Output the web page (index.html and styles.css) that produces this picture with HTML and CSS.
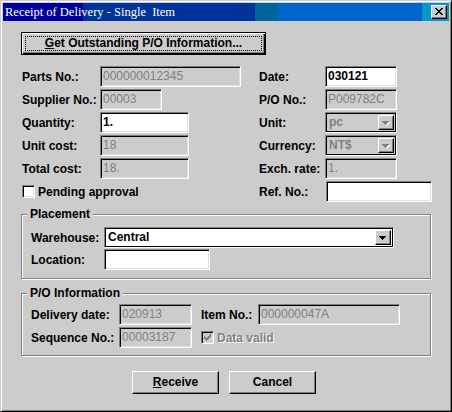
FILE: index.html
```html
<!DOCTYPE html>
<html>
<head>
<meta charset="utf-8">
<title>Receipt of Delivery - Single Item</title>
<link rel="stylesheet" href="styles.css">
</head>
<body>
<div class="window">
  <div class="titlebar">
    <span class="title">Receipt of Delivery - Single  Item</span>
    <span class="close">
      <svg width="8" height="7" viewBox="0 0 8 7" shape-rendering="crispEdges"><path fill="#000" d="M0 0h2v1h-2z M6 0h2v1h-2z M1 1h2v1h-2z M5 1h2v1h-2z M2 2h4v1h-4z M3 3h2v1h-2z M2 4h4v1h-4z M1 5h2v1h-2z M5 5h2v1h-2z M0 6h2v1h-2z M6 6h2v1h-2z"/></svg>
    </span>
  </div>
  <div class="content">
    <div class="btn default wide"><span class="focus"><u>G</u>et Outstanding P/O Information...</span></div>

    <div class="fields">
      <span class="lbl">Parts No.:</span>
      <div class="edit dis w141">000000012345</div>
      <span class="lbl">Date:</span>
      <div class="edit w72">030121</div>

      <span class="lbl">Supplier No.:</span>
      <div class="edit dis w62">00003</div>
      <span class="lbl">P/O No.:</span>
      <div class="edit dis w72">P009782C</div>

      <span class="lbl">Quantity:</span>
      <div class="edit w89">1.</div>
      <span class="lbl">Unit:</span>
      <div class="combo dis w72"><span class="ctext">pc</span><span class="drop"><svg width="8" height="5" viewBox="0 0 8 5" shape-rendering="crispEdges"><path fill="#fff" d="M1 1h7v1h-1v1h-1v1h-1v1h-1v-1h-1v-1h-1v-1h-1z"/><path fill="#808080" d="M0 0h7v1h-1v1h-1v1h-1v1h-1v-1h-1v-1h-1v-1h-1z"/></svg></span></div>

      <span class="lbl">Unit cost:</span>
      <div class="edit dis w89">18</div>
      <span class="lbl">Currency:</span>
      <div class="combo dis w72"><span class="ctext">NT$</span><span class="drop"><svg width="8" height="5" viewBox="0 0 8 5" shape-rendering="crispEdges"><path fill="#fff" d="M1 1h7v1h-1v1h-1v1h-1v1h-1v-1h-1v-1h-1v-1h-1z"/><path fill="#808080" d="M0 0h7v1h-1v1h-1v1h-1v1h-1v-1h-1v-1h-1v-1h-1z"/></svg></span></div>

      <span class="lbl">Total cost:</span>
      <div class="edit dis w89">18.</div>
      <span class="lbl">Exch. rate:</span>
      <div class="edit dis w72">1.</div>

      <div class="check span2"><span class="box"></span><span>Pending approval</span></div>
      <span class="lbl">Ref. No.:</span>
      <div class="edit w106 nudge"></div>
    </div>

    <div class="group placement">
      <span class="legend">Placement</span>
      <div class="grid-place">
        <span class="lbl">Warehouse:</span>
        <div class="combo w290"><span class="ctext">Central</span><span class="drop"><svg width="7" height="4" viewBox="0 0 7 4" shape-rendering="crispEdges"><path fill="#000" d="M0 0h7v1h-1v1h-1v1h-1v1h-1v-1h-1v-1h-1v-1h-1z"/></svg></span></div>
        <span class="lbl">Location:</span>
        <div class="edit w106"></div>
      </div>
    </div>

    <div class="group poinfo">
      <span class="legend">P/O Information</span>
      <div class="grid-po">
        <span class="lbl">Delivery date:</span>
        <div class="edit dis w73">020913</div>
        <span class="lbl">Item No.:</span>
        <div class="edit dis w142">000000047A</div>

        <span class="lbl">Sequence No.:</span>
        <div class="edit dis w73">00003187</div>
        <div class="check disabled span2"><span class="box"><svg width="7" height="7" viewBox="0 0 7 7" shape-rendering="crispEdges"><path fill="#808080" d="M6 0h1v3h-1z M5 1h1v3h-1z M4 2h1v3h-1z M3 3h1v3h-1z M2 4h1v3h-1z M1 3h1v3h-1z M0 2h1v3h-1z"/></svg></span><span class="dtext">Data valid</span></div>
      </div>
    </div>

    <div class="footer">
      <div class="btn action"><span><u>R</u>eceive</span></div>
      <div class="btn action"><span>Cancel</span></div>
    </div>
  </div>
</div>
</body>
</html>
```

FILE: styles.css
```css
* { box-sizing: border-box; }
html, body { margin: 0; padding: 0; background: #cccccc; }
body { font: bold 12px "Liberation Sans", Arial, sans-serif; color: #000; }

.window {
  width: 452px;
  height: 412px;
  border: 1px solid;
  border-color: #cccccc #000 #000 #cccccc;
  box-shadow: inset 1px 1px #fff, inset -1px -1px #808080;
  padding: 2px;
  background: #cccccc;
}

.titlebar {
  height: 18px;
  display: flex;
  align-items: center;
  padding: 0 2px;
  background: linear-gradient(to right,
    #00009c 0, #00009c 80px,
    #003399 80px, #003399 252px,
    #006699 252px, #006699 275px,
    #0066cc 275px, #0066cc 419px,
    #0099cc 419px, #0099cc 100%);
}
.title {
  font: normal 12.5px "Liberation Serif", "Times New Roman", serif;
  color: #fff;
  white-space: pre;
  line-height: 18px;
}
.close {
  margin-left: auto;
  width: 16px;
  height: 14px;
  background: #cccccc;
  border: 1px solid;
  border-color: #fff #000 #000 #fff;
  box-shadow: inset -1px -1px #808080;
  display: flex;
  align-items: center;
  justify-content: center;
  padding: 0 1px 1px 0;
}
.close svg { display: block; }

.content { padding: 11px 0 0 18px; }

.btn {
  height: 23px;
  display: flex;
  align-items: center;
  justify-content: center;
  background: #cccccc;
  border: 1px solid;
  border-color: #fff #000 #000 #fff;
  box-shadow: inset -1px -1px #808080;
  line-height: 14px;
}
.btn.default {
  border-color: #000;
  box-shadow: inset 1px 1px #fff, inset -1px -1px #000, inset -2px -2px #808080;
  padding: 3px;
}
.btn.wide { width: 245px; }
.focus {
  display: flex;
  align-items: center;
  justify-content: center;
  width: 100%;
  height: 100%;
  border: 1px dotted #000;
  padding-bottom: 1px;
}
.btn.action { width: 87px; padding-bottom: 1px; }

.fields {
  display: grid;
  grid-template-columns: 78px 159px 66px 1fr;
  grid-auto-rows: 21px;
  row-gap: 2px;
  align-items: center;
  margin: 11px 0 0 1px;
}
.lbl { white-space: nowrap; line-height: 14px; }
.span2 { grid-column: span 2; }

.edit {
  height: 21px;
  border: 1px solid;
  border-color: #808080 #fff #fff #808080;
  box-shadow: inset 1px 1px #000, inset -1px -1px #dfdfdf;
  background: #fff;
  padding: 0 2px;
  line-height: 18px;
  white-space: nowrap;
  overflow: hidden;
}
.edit.dis { background: #cccccc; color: #808080; font-weight: normal; }
.nudge { margin-left: 1px; }

.w62 { width: 62px; }
.w72 { width: 72px; }
.w73 { width: 73px; }
.w89 { width: 89px; }
.w106 { width: 106px; }
.w141 { width: 141px; }
.w142 { width: 142px; }
.w290 { width: 290px; }

.combo {
  height: 21px;
  display: flex;
  border: 1px solid;
  border-color: #808080 #fff #fff #808080;
  box-shadow: inset 0 0 0 1px #000;
  background: #fff;
  padding: 2px;
}
.combo.dis { background: #cccccc; color: #808080; }
.ctext { flex: 1; padding-left: 1px; line-height: 15px; white-space: nowrap; }
.drop {
  width: 16px;
  height: 15px;
  background: #cccccc;
  border: 1px solid;
  border-color: #fff #000 #000 #fff;
  box-shadow: inset -1px -1px #808080;
  display: flex;
  align-items: center;
  justify-content: center;
  padding: 1px 1px 0 0;
}
.drop svg { display: block; }

.check { display: flex; align-items: center; gap: 3px; line-height: 14px; }
.box {
  width: 13px;
  height: 13px;
  background: #fff;
  border: 1px solid;
  border-color: #808080 #fff #fff #808080;
  box-shadow: inset 1px 1px #000, inset -1px -1px #dfdfdf;
  display: flex;
  align-items: center;
  justify-content: center;
}
.check.disabled .box { background: #cccccc; }
.box svg { display: block; }
.dtext { color: #808080; text-shadow: 1px 1px 0 #fff; }

.group {
  position: relative;
  width: 410px;
  border: 1px solid #808080;
  box-shadow: inset 1px 1px #fff, 1px 1px #fff;
}
.legend {
  position: absolute;
  top: -8px;
  left: 5px;
  padding: 0 3px;
  background: #cccccc;
  line-height: 14px;
}
.placement { margin-top: 12px; height: 65px; padding: 12px 0 0 9px; }
.poinfo { margin-top: 14px; height: 63px; padding: 10px 0 0 9px; }

.grid-place {
  display: grid;
  grid-template-columns: 73px 1fr;
  grid-auto-rows: 21px;
  row-gap: 1px;
  align-items: center;
}
.grid-po {
  display: grid;
  grid-template-columns: 88px 82px 57px 1fr;
  grid-auto-rows: 21px;
  row-gap: 2px;
  align-items: center;
}

.footer {
  display: flex;
  gap: 10px;
  margin: 15px 0 0 111px;
}
```
